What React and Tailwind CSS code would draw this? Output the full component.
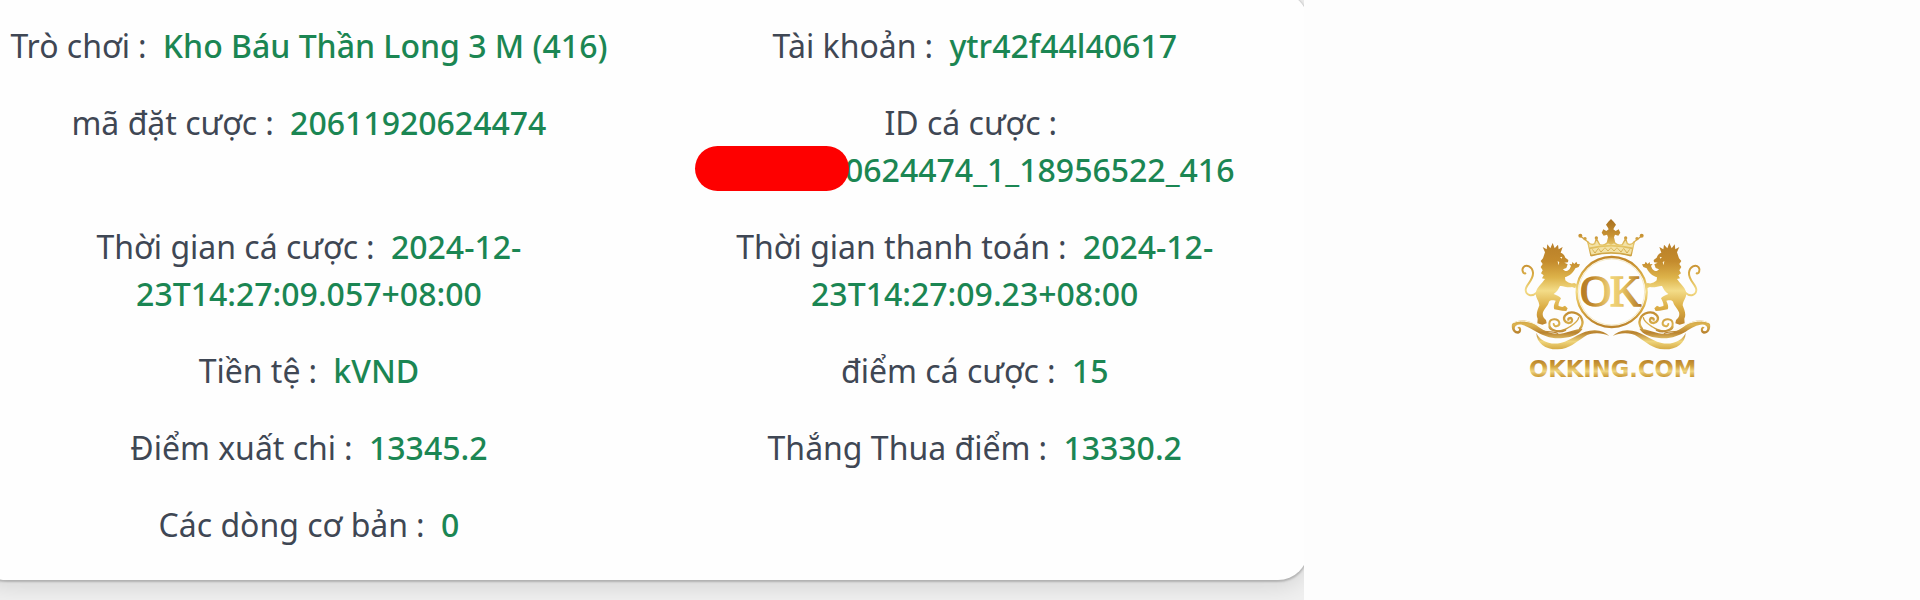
import React from "react";

const fields = [
  { label: "Trò chơi", value: "Kho Báu Thần Long 3 M (416)" },
  { label: "Tài khoản", value: "ytr42f44l40617" },
  { label: "mã đặt cược", value: "20611920624474" },
  { label: "ID cá cược", value: "0624474_1_18956522_416", masked: true },
  { label: "Thời gian cá cược", value: "2024-12-23T14:27:09.057+08:00" },
  { label: "Thời gian thanh toán", value: "2024-12-23T14:27:09.23+08:00" },
  { label: "Tiền tệ", value: "kVND" },
  { label: "điểm cá cược", value: "15" },
  { label: "Điểm xuất chi", value: "13345.2" },
  { label: "Thắng Thua điểm", value: "13330.2" },
  { label: "Các dòng cơ bản", value: "0" },
];

const Field = ({ label, value, masked }) => (
  <div className="px-8 text-center">
    <dt className="inline text-[#3f4754]">
      {label}
      <span className="mx-2">:</span>
    </dt>{" "}
    <dd className="inline font-medium text-[#1b8653]">
      {masked ? (
        <span className="inline-block whitespace-nowrap">
          {/* Start of the ID is hidden from the viewer */}
          <span className="relative z-10 -mr-1 -ml-5 inline-block h-[45px] w-[154px] rounded-full bg-[#fe0000] align-top" />
          {value}
        </span>
      ) : (
        value
      )}
    </dd>
  </div>
);

// Left half of the crest: lion, tail and scrollwork
const CrestSide = () => (
  <g>
    <path
      fill="url(#gold)"
      d="M138 127 L131 111 L143 118 L145 103 L154 115 L161 99 L167 115 L177 104 L179 118 L191 111 L185 128
         C192 130 197 136 199 143 L208 150 L207 157 L196 158 L206 163 L202 174 L192 178
         C198 186 206 184 212 177 L216 168 L211 162 L219 163 L220 156 L226 162 L232 155 L235 162 L243 163 L239 171 L229 175
         C222 189 210 199 198 202 L199 211 C207 219 216 222 226 219 L233 223 L229 235 L219 231
         C205 234 190 226 183 228 C178 238 174 246 164 252
         C174 256 182 259 186 265 C182 274 177 282 179 288 L190 291 L198 287 L206 295 L202 303 L190 302 L166 298
         C162 289 167 279 170 272 C160 270 154 270 150 275
         C146 289 135 297 132 307 C129 318 134 324 141 330 L143 340 L130 344 L115 340 L116 326
         C109 312 117 298 121 286 C121 272 107 262 111 245 C115 231 129 220 138 207
         L129 205 L134 196 L126 190 L131 181 L125 171 L131 162 L125 153 L132 145 Z"
    />
    <path d="M183 142 l7 -2 l-2 6 z M176 153 l5 4 l-3 9 z" fill="#fff8df" />
    <path
      d="M113 248 C98 261 81 256 80 240 C80 223 104 212 102 188 C100 169 82 162 73 172 C67 180 73 193 79 190"
      fill="none"
      stroke="url(#gold)"
      strokeWidth="6"
      strokeLinecap="round"
    />
    <path
      fill="url(#scroll)"
      d="M39 342 C56 325 92 330 112 346 C133 362 154 374 184 371 C209 368 225 357 251 356 C242 371 221 381 192 384 C159 388 133 377 112 365 C90 352 65 337 51 347 C43 354 49 366 57 363 C64 360 58 353 55 354 C61 345 70 355 65 366 C57 379 34 367 39 342 Z"
    />
    <path
      fill="url(#scroll)"
      d="M112 368 C120 390 151 406 184 399 C222 391 248 360 288 361 C307 362 321 369 331 378 C306 367 277 367 256 380 C229 397 213 416 176 418 C141 419 112 400 112 368 Z"
    />
    <path
      d="M42 338 C70 327 104 336 132 354 C155 369 185 363 205 353"
      fill="none"
      stroke="#fdf8e6"
      strokeWidth="3"
    />
    <g fill="none" stroke="url(#scroll)" strokeLinecap="round">
      <path strokeWidth="6" d="M199 360 C177 371 149 359 151 340 C153 324 177 324 181 338 C183 350 165 352 164 342" />
      <path strokeWidth="7" d="M243 356 C258 338 249 313 225 308 C205 304 190 319 197 332 C203 343 221 340 219 329 C217 322 208 323 208 329" />
      <path strokeWidth="4" d="M150 351 C153 363 185 369 211 351 C225 342 236 337 239 323" />
      <path strokeWidth="4" d="M118 362 C139 367 159 363 176 370" />
    </g>
  </g>
);

const Logo = () => (
  <svg viewBox="0 0 675 540" className="h-[180px] w-[225px]" role="img" aria-label="OKKING.COM">
    <defs>
      <linearGradient id="gold" gradientUnits="userSpaceOnUse" x1="0" y1="100" x2="0" y2="345">
        <stop offset="0" stopColor="#b98029" />
        <stop offset="0.22" stopColor="#c48b2d" />
        <stop offset="0.42" stopColor="#ddb34a" />
        <stop offset="0.58" stopColor="#f3dc88" />
        <stop offset="0.78" stopColor="#dcae45" />
        <stop offset="1" stopColor="#bd852d" />
      </linearGradient>
      <linearGradient id="scroll" gradientUnits="userSpaceOnUse" x1="0" y1="305" x2="0" y2="420">
        <stop offset="0" stopColor="#c08a30" />
        <stop offset="0.35" stopColor="#dcb350" />
        <stop offset="0.55" stopColor="#b98330" />
        <stop offset="0.78" stopColor="#efd57c" />
        <stop offset="1" stopColor="#d3a63f" />
      </linearGradient>
      <linearGradient id="crown" gradientUnits="userSpaceOnUse" x1="0" y1="28" x2="0" y2="140">
        <stop offset="0" stopColor="#a8701f" />
        <stop offset="0.45" stopColor="#c99434" />
        <stop offset="0.7" stopColor="#e6c768" />
        <stop offset="1" stopColor="#c89a3b" />
      </linearGradient>
      <linearGradient id="monogram" gradientUnits="userSpaceOnUse" x1="245" y1="0" x2="425" y2="0">
        <stop offset="0" stopColor="#b57b25" />
        <stop offset="0.2" stopColor="#c1892d" />
        <stop offset="0.5" stopColor="#f0d47c" />
        <stop offset="0.68" stopColor="#e9c766" />
        <stop offset="1" stopColor="#b47a26" />
      </linearGradient>
      <linearGradient id="wordmark" gradientUnits="userSpaceOnUse" x1="0" y1="450" x2="0" y2="502">
        <stop offset="0" stopColor="#b8822c" />
        <stop offset="0.35" stopColor="#d0a03b" />
        <stop offset="0.65" stopColor="#f0d682" />
        <stop offset="1" stopColor="#c8942f" />
      </linearGradient>
    </defs>

    <CrestSide />
    <g transform="translate(672 0) scale(-1 1)">
      <CrestSide />
    </g>

    {/* Crown */}
    <path
      fill="#f3e2a6"
      d="M277 138 L268 96 Q278 108 288 101 L293 88 L303 104 Q322 108 336 88 Q350 108 369 104 L379 88 L384 101 Q394 108 404 96 L395 138 Q336 122 277 138 Z"
    />
    <path
      fill="url(#crown)"
      d="M336 27 L344 35 L351 44 L346 52 L343 58 L350 63 L359 58 L364 68 L358 77 L348 74 L345 82 L349 98 L336 104 L323 98 L327 82 L324 74 L314 77 L308 68 L313 58 L322 63 L329 58 L326 52 L321 44 L328 35 Z"
    />
    <g fill="none" stroke="url(#crown)" strokeWidth="4" strokeLinejoin="round">
      <path d="M276 138 L266 95 L244 78 M396 138 L406 95 L428 78" />
      <path d="M266 95 Q276 108 287 101 L292 86 L302 104 Q320 110 336 87 Q352 110 370 104 L380 86 L385 101 Q396 108 406 95" />
      <path strokeWidth="5" d="M271 115 Q336 99 401 115 M276 137 Q336 120 396 137" />
      <path strokeWidth="3" d="M280 118 l8 11 l10 -14 l8 11 l12 -13 l9 10 l9 -10 l9 10 l9 -10 l12 13 l8 -11 l10 14 l8 -11" />
    </g>
    <g fill="url(#crown)">
      <circle cx="244" cy="77" r="6" />
      <circle cx="428" cy="77" r="6" />
      <circle cx="292" cy="84" r="5" />
      <circle cx="380" cy="84" r="5" />
      <circle cx="258" cy="86" r="5" />
      <circle cx="414" cy="86" r="5" />
    </g>

    <circle cx="338" cy="246" r="105" fill="#fefefe" stroke="url(#gold)" strokeWidth="7" />
    <circle cx="338" cy="246" r="99" fill="none" stroke="#f1dfaa" strokeWidth="2" />
    <text
      y="288"
      fontSize="130"
      fontFamily="'Liberation Serif', serif"
      fill="url(#monogram)"
      stroke="url(#monogram)"
      strokeWidth="4"
    >
      <tspan x="243">O</tspan>
      <tspan x="333">K</tspan>
    </text>
    <text
      x="341"
      y="500"
      textAnchor="middle"
      fontSize="68"
      fontWeight="700"
      fontFamily="'DejaVu Sans', sans-serif"
      fill="url(#wordmark)"
    >
      OKKING.COM
    </text>
  </svg>
);

const App = () => {
  return (
    <div className="flex min-h-screen bg-[#fdfdfd]">
      <section className="w-[67.9%] overflow-hidden bg-[#f0f0f0]">
        <dl className="-mt-2 -mr-1 -ml-6 grid grid-cols-2 gap-y-[30px] rounded-[30px] bg-[#fefefe] pt-[30px] pb-8 font-['Noto_Sans',sans-serif] text-[32px] leading-[47px] shadow-[0_1px_2px_1px_rgba(0,0,0,0.2),0_6px_24px_rgba(0,0,0,0.12)]">
          {fields.map((field) => (
            <Field key={field.label} {...field} />
          ))}
        </dl>
      </section>
      <aside className="flex flex-1 items-center justify-center">
        <Logo />
      </aside>
    </div>
  );
};

export default App;
